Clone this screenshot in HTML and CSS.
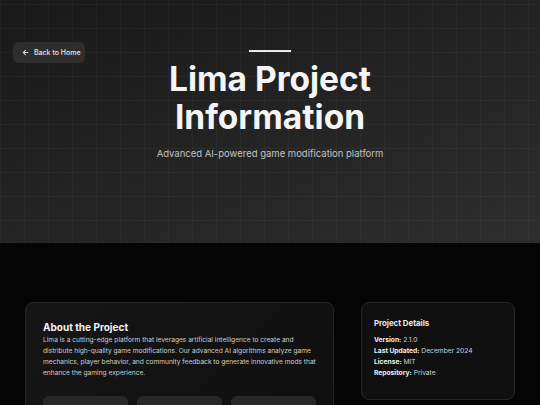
FILE: index.html
```html
<!DOCTYPE html>
<html>
<head>
<meta charset="utf-8">
<link rel="stylesheet" href="styles.css">
</head>
<body>
<header class="hero">
  <a class="back-btn" href="#">
    <svg class="back-icon" viewBox="0 0 10 10" width="7" height="7"><path d="M8.5 5H1.8M4.8 2L1.8 5l3 3" fill="none" stroke="#e6e6e6" stroke-width="1.5" stroke-linecap="round" stroke-linejoin="round"/></svg>
    <span>Back to Home</span>
  </a>
  <div class="hero-content">
    <div class="hero-rule"></div>
    <h1 class="hero-title">Lima Project<br>Information</h1>
    <p class="hero-sub">Advanced AI-powered game modification platform</p>
  </div>
</header>
<main class="main">
  <div class="grid">
    <section class="card about">
      <h2 class="about-title">About the Project</h2>
      <p class="about-text">Lima is a cutting-edge platform that leverages artificial intelligence to create and distribute high-quality game modifications. Our advanced AI algorithms analyze game mechanics, player behavior, and community feedback to generate innovative mods that enhance the gaming experience.</p>
      <div class="stats">
        <div class="stat"></div>
        <div class="stat"></div>
        <div class="stat"></div>
      </div>
    </section>
    <aside class="card details">
      <h3 class="details-title">Project Details</h3>
      <ul class="details-list">
        <li><b>Version:</b> 2.1.0</li>
        <li><b>Last Updated:</b> December 2024</li>
        <li><b>License:</b> MIT</li>
        <li><b>Repository:</b> Private</li>
      </ul>
    </aside>
  </div>
</main>
</body>
</html>
```
FILE: styles.css
```css
* { box-sizing: border-box; }
html, body { margin: 0; padding: 0; }
body {
  background: #050505;
  font-family: Inter, "Liberation Sans", sans-serif;
  color: #fff;
  overflow: hidden;
  height: 405px;
}
.hero {
  position: relative;
  height: 243px;
  background:
    linear-gradient(rgba(255,255,255,0.03) 1px, transparent 1px) 0 4px / 24px 24px,
    linear-gradient(90deg, rgba(255,255,255,0.03) 1px, transparent 1px) 0 0 / 24px 24px,
    linear-gradient(160deg, #191919 0%, #232323 50%, #2e2e2e 100%);
  padding-top: 50px;
}
.back-btn {
  position: absolute;
  left: 13px;
  top: 42px;
  width: 72px;
  height: 21px;
  border-radius: 6px;
  background: #2e2e2e;
  display: flex;
  align-items: center;
  gap: 5px;
  padding-left: 9px;
  color: #e6e6e6;
  text-decoration: none;
  font-size: 7px;
  font-weight: 500;
}
.back-icon { display: block; }
.hero-content {
  display: flex;
  flex-direction: column;
  align-items: center;
}
.hero-rule {
  width: 42px;
  height: 2px;
  background: #e8e8e8;
}
.hero-title {
  margin: 8px 0 0;
  font-size: 33.5px;
  line-height: 38px;
  font-weight: 700;
  text-align: center;
  color: #f5f5f5;
}
.hero-sub {
  margin: 12px 0 0;
  font-size: 9.5px;
  color: #c4c4c4;
}
.main {
  padding: 59px 25px 0;
}
.grid {
  display: grid;
  grid-template-columns: 309px 154px;
  justify-content: space-between;
  align-items: start;
}
.card {
  background: #101010;
  border: 1px solid #262626;
  border-radius: 8px;
}
.about {
  background: linear-gradient(135deg, #161616, #0f0f0f);
  padding: 17px 17px 0;
  height: 110px;
  overflow: hidden;
}
.about-title {
  margin: 0;
  font-size: 10px;
  line-height: 14px;
  font-weight: 700;
  color: #f2f2f2;
}
.about-text {
  margin: 1px 0 0;
  font-size: 6.62px;
  line-height: 11px;
  color: #cfcfcf;
}
.stats {
  display: grid;
  grid-template-columns: repeat(3, 1fr);
  gap: 9px;
  margin-top: 17px;
}
.stat {
  height: 40px;
  background: #282828;
  border-radius: 6px;
}
.details {
  padding: 14px 12px 20px;
  height: 98px;
}
.details-title {
  margin: 0;
  font-size: 7.8px;
  line-height: 12px;
  font-weight: 700;
  color: #ececec;
}
.details-list {
  list-style: none;
  margin: 6px 0 0;
  padding: 0;
  font-size: 6.7px;
  line-height: 11px;
  color: #d0d0d0;
}
.details-list b { color: #f0f0f0; font-weight: 700; }
```
